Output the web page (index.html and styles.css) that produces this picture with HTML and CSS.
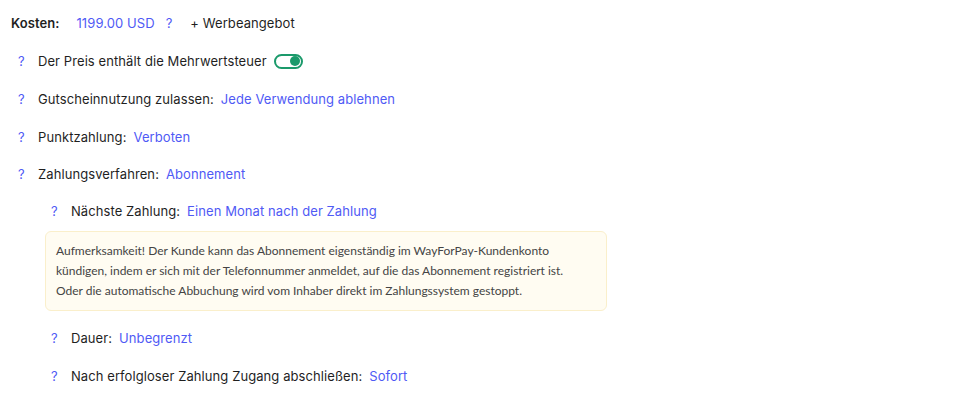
FILE: index.html
```html
<!DOCTYPE html>
<html lang="de">
<head>
    <meta charset="UTF-8">
    <meta name="viewport" content="width=device-width, initial-scale=1.0">
    <title>Kosten</title>
    <link rel="stylesheet" href="styles.css">
</head>
<body>
    <div class="settings">
        <div class="price-row">
            <span class="price-label">Kosten:</span>
            <span class="value">1199.00 USD</span>
            <span class="hint">?</span>
            <span class="promo">+ Werbeangebot</span>
        </div>

        <div class="row">
            <span class="hint">?</span>
            <span class="label">Der Preis enthält die Mehrwertsteuer</span>
            <span class="toggle"><span class="knob"></span></span>
        </div>

        <div class="row">
            <span class="hint">?</span>
            <span class="label">Gutscheinnutzung zulassen:</span>
            <span class="value">Jede Verwendung ablehnen</span>
        </div>

        <div class="row">
            <span class="hint">?</span>
            <span class="label">Punktzahlung:</span>
            <span class="value">Verboten</span>
        </div>

        <div class="row">
            <span class="hint">?</span>
            <span class="label">Zahlungsverfahren:</span>
            <span class="value">Abonnement</span>
        </div>

        <div class="nested">
            <div class="row">
                <span class="hint">?</span>
                <span class="label">Nächste Zahlung:</span>
                <span class="value">Einen Monat nach der Zahlung</span>
            </div>

            <div class="notice">
                Aufmerksamkeit! Der Kunde kann das Abonnement eigenständig im WayForPay-Kundenkonto
                kündigen, indem er sich mit der Telefonnummer anmeldet, auf die das Abonnement registriert ist.
                Oder die automatische Abbuchung wird vom Inhaber direkt im Zahlungssystem gestoppt.
            </div>

            <div class="row">
                <span class="hint">?</span>
                <span class="label">Dauer:</span>
                <span class="value">Unbegrenzt</span>
            </div>

            <div class="row">
                <span class="hint">?</span>
                <span class="label">Nach erfolgloser Zahlung Zugang abschließen:</span>
                <span class="value">Sofort</span>
            </div>
        </div>
    </div>
</body>
</html>
```

FILE: styles.css
```css
/* General styling */
body {
    font-family: Inter, "Noto Sans", sans-serif;
    font-size: 13px;
    letter-spacing: 0.08px;
    color: #1f1f1f;
    background-color: #fff;
    margin: 0;
    padding: 0;
}

.settings {
    padding: 13px 11px;
}

/* Price header */
.price-row {
    display: flex;
    align-items: center;
    height: 20px;
}

.price-label {
    font-weight: 600;
    margin-right: 17px;
}

.price-row .hint {
    width: auto;
    margin: 0 18px 0 11px;
}

/* Rows */
.row {
    display: flex;
    align-items: center;
    height: 20px;
    margin-top: 18px;
    padding-left: 7px;
}

.row:nth-child(5) {
    margin-top: 17px;
}

.hint {
    color: #4f5af5;
    width: 20px;
}

.label {
    margin-right: 7px;
}

.value {
    color: #4f5af5;
}

/* Toggle */
.toggle {
    width: 23px;
    height: 11px;
    border: 2px solid #1b9a6b;
    border-radius: 8px;
    display: inline-flex;
    align-items: center;
    justify-content: flex-end;
    padding: 0 1px;
}

.knob {
    width: 10px;
    height: 10px;
    background-color: #1b9a6b;
    border-radius: 50%;
}

/* Nested block */
.nested {
    padding-left: 34px;
}

.nested .row {
    padding-left: 6px;
}

.nested .row:first-child {
    margin-top: 17px;
}

.notice {
    margin-top: 10px;
    width: 520px;
    padding: 9px 30px 9px 10px;
    background-color: #fffcf2;
    border: 1px solid #faefcb;
    border-radius: 6px;
    font-family: Lato, sans-serif;
    font-size: 12px;
    letter-spacing: 0;
    line-height: 20px;
    color: #444;
}

.notice + .row {
    margin-top: 17px;
}
```
